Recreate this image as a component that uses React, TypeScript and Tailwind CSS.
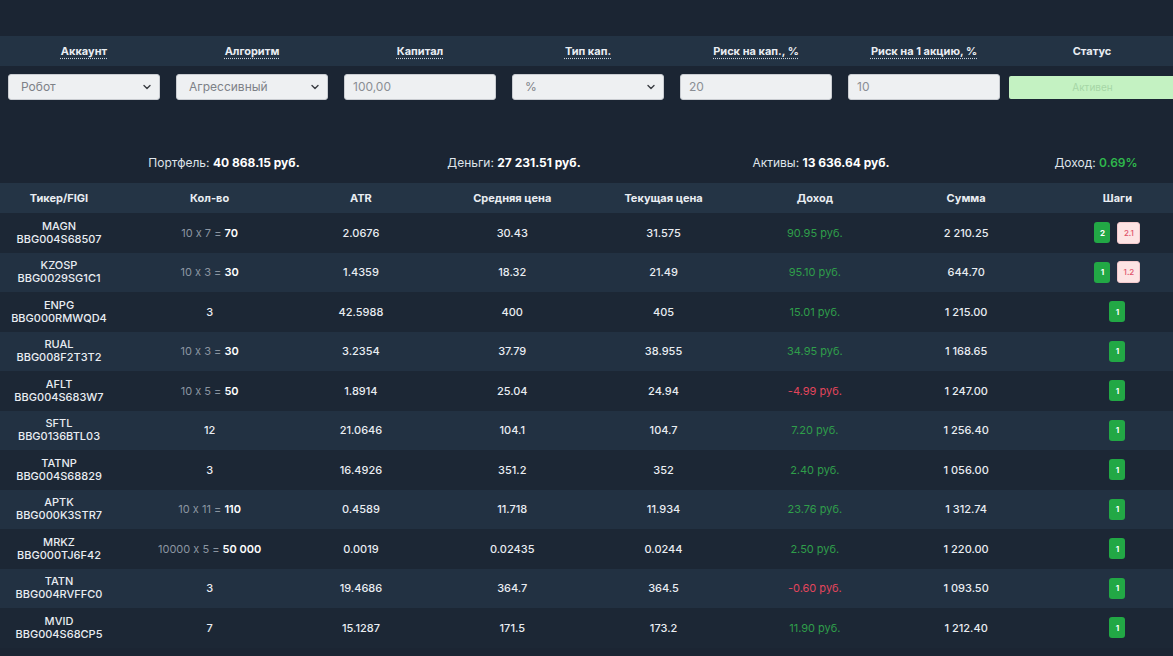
import { ChevronDown } from "lucide-react";

type Row = {
  ticker: string;
  figi: string;
  lot?: string;
  qty: string;
  atr: string;
  avg: string;
  cur: string;
  income: string;
  sum: string;
  steps: string[];
};

const rows: Row[] = [
  { ticker: "MAGN", figi: "BBG004S68507", lot: "10 x 7", qty: "70", atr: "2.0676", avg: "30.43", cur: "31.575", income: "90.95 руб.", sum: "2 210.25", steps: ["2", "2.1"] },
  { ticker: "KZOSP", figi: "BBG0029SG1C1", lot: "10 x 3", qty: "30", atr: "1.4359", avg: "18.32", cur: "21.49", income: "95.10 руб.", sum: "644.70", steps: ["1", "1.2"] },
  { ticker: "ENPG", figi: "BBG000RMWQD4", qty: "3", atr: "42.5988", avg: "400", cur: "405", income: "15.01 руб.", sum: "1 215.00", steps: ["1"] },
  { ticker: "RUAL", figi: "BBG008F2T3T2", lot: "10 x 3", qty: "30", atr: "3.2354", avg: "37.79", cur: "38.955", income: "34.95 руб.", sum: "1 168.65", steps: ["1"] },
  { ticker: "AFLT", figi: "BBG004S683W7", lot: "10 x 5", qty: "50", atr: "1.8914", avg: "25.04", cur: "24.94", income: "-4.99 руб.", sum: "1 247.00", steps: ["1"] },
  { ticker: "SFTL", figi: "BBG0136BTL03", qty: "12", atr: "21.0646", avg: "104.1", cur: "104.7", income: "7.20 руб.", sum: "1 256.40", steps: ["1"] },
  { ticker: "TATNP", figi: "BBG004S68829", qty: "3", atr: "16.4926", avg: "351.2", cur: "352", income: "2.40 руб.", sum: "1 056.00", steps: ["1"] },
  { ticker: "APTK", figi: "BBG000K3STR7", lot: "10 x 11", qty: "110", atr: "0.4589", avg: "11.718", cur: "11.934", income: "23.76 руб.", sum: "1 312.74", steps: ["1"] },
  { ticker: "MRKZ", figi: "BBG000TJ6F42", lot: "10000 x 5", qty: "50 000", atr: "0.0019", avg: "0.02435", cur: "0.0244", income: "2.50 руб.", sum: "1 220.00", steps: ["1"] },
  { ticker: "TATN", figi: "BBG004RVFFC0", qty: "3", atr: "19.4686", avg: "364.7", cur: "364.5", income: "-0.60 руб.", sum: "1 093.50", steps: ["1"] },
  { ticker: "MVID", figi: "BBG004S68CP5", qty: "7", atr: "15.1287", avg: "171.5", cur: "173.2", income: "11.90 руб.", sum: "1 212.40", steps: ["1"] },
];

const settingsLabels = [
  "Аккаунт",
  "Алгоритм",
  "Капитал",
  "Тип кап.",
  "Риск на кап., %",
  "Риск на 1 акцию, %",
];

function SelectBox({ value }: { value: string }) {
  return (
    <div className="flex h-[26px] items-center justify-between rounded-[3px] border border-[#c9ccd1] bg-[#eef0f2] pl-3 pr-[6px] text-[12px] text-[#7d8187]">
      <span>{value}</span>
      <ChevronDown size={12} strokeWidth={2.8} className="text-[#3a3d42]" />
    </div>
  );
}

function InputBox({ value }: { value: string }) {
  return (
    <div className="flex h-[26px] items-center rounded-[3px] border border-[#c9ccd1] bg-[#eef0f2] px-2 text-[12px] text-[#8a8e94]">
      {value}
    </div>
  );
}

function Step({ value }: { value: string }) {
  if (value.includes(".")) {
    return (
      <div className="flex h-[22px] w-[23px] items-center justify-center rounded-[3px] border border-[#f3c9cc] bg-[#fde4e4] text-[8px] text-[#e0526a]">
        {value}
      </div>
    );
  }
  return (
    <div className="flex h-[21px] w-[16px] items-center justify-center rounded-[3px] bg-[#22a845] text-[8px] font-bold text-white">
      {value}
    </div>
  );
}

const tableHeads = [
  "Тикер/FIGI",
  "Кол-во",
  "ATR",
  "Средняя цена",
  "Текущая цена",
  "Доход",
  "Сумма",
  "Шаги",
];

export default function App() {
  return (
    <div
      className="min-h-[656px] w-full overflow-hidden bg-[#1b2533] text-[#e9edf2] [font-feature-settings:'calt'_0]"
      style={{ fontFamily: "Inter, 'Noto Sans', sans-serif" }}
    >
      {/* TOP */}
      <div className="h-[36px]" />

      {/* SETTINGS */}
      <div className="grid h-[30px] grid-cols-[repeat(7,168px)] items-center bg-[#233344] text-[11px] font-bold">
        {settingsLabels.map((label) => (
          <div key={label} className="text-center">
            <span className="underline decoration-dotted decoration-[#c8d0da] underline-offset-[3px]">
              {label}
            </span>
          </div>
        ))}
        <div className="text-center">Статус</div>
      </div>

      <div className="grid grid-cols-[repeat(7,168px)] py-2">
        <div className="px-2">
          <SelectBox value="Робот" />
        </div>
        <div className="px-2">
          <SelectBox value="Агрессивный" />
        </div>
        <div className="px-2">
          <InputBox value="100,00" />
        </div>
        <div className="px-2">
          <SelectBox value="%" />
        </div>
        <div className="px-2">
          <InputBox value="20" />
        </div>
        <div className="px-2">
          <InputBox value="10" />
        </div>
        <div className="flex items-center pl-[1px]">
          <div className="flex h-[23px] w-[175px] items-center justify-center rounded-[2px] bg-[#c4f2c2] text-[10px] text-[#a6d6a6]">
            Активен
          </div>
        </div>
      </div>

      {/* SUMMARY */}
      <div className="grid h-[75px] grid-cols-[448px_132px_482px_68px] items-end pb-[10px] text-[12px] leading-[20px]">
        <div className="flex justify-center whitespace-nowrap">
          <span className="text-[#dfe4ea]">Портфель:&nbsp;</span>
          <span className="font-bold text-white">40 868.15 руб.</span>
        </div>
        <div className="flex justify-center whitespace-nowrap">
          <span className="text-[#dfe4ea]">Деньги:&nbsp;</span>
          <span className="font-bold text-white">27 231.51 руб.</span>
        </div>
        <div className="flex justify-center whitespace-nowrap">
          <span className="text-[#dfe4ea]">Активы:&nbsp;</span>
          <span className="font-bold text-white">13 636.64 руб.</span>
        </div>
        <div className="flex justify-center whitespace-nowrap">
          <span className="text-[#dfe4ea]">Доход:&nbsp;</span>
          <span className="font-semibold text-[#2fb84c]">0.69%</span>
        </div>
      </div>

      {/* TABLE */}
      <div className="grid h-[30px] grid-cols-[134px_repeat(7,151.3px)] items-center bg-[#243445] text-[11px] font-bold">
        {tableHeads.map((h, i) => (
          <div key={h} className={i === 0 ? "pr-4 text-center" : "text-center"}>
            {h}
          </div>
        ))}
      </div>

      {rows.map((row, i) => (
        <div
          key={row.ticker}
          className={`grid h-[39.5px] grid-cols-[134px_repeat(7,151.3px)] items-center text-[11px] font-medium ${
            i % 2 === 1 ? "bg-[#223142]" : "bg-[#1c2735]"
          }`}
        >
          <div className="pr-4 text-center leading-[13px]">
            <div>{row.ticker}</div>
            <div>{row.figi}</div>
          </div>
          <div className="text-center">
            {row.lot && (
              <span className="font-normal text-[#8b95a1]">{row.lot} = </span>
            )}
            <span className={row.lot ? "font-semibold text-white" : ""}>
              {row.qty}
            </span>
          </div>
          <div className="text-center">{row.atr}</div>
          <div className="text-center">{row.avg}</div>
          <div className="text-center">{row.cur}</div>
          <div
            className={`text-center font-normal ${
              row.income.startsWith("-") ? "text-[#e2455c]" : "text-[#2f9e4a]"
            }`}
          >
            {row.income}
          </div>
          <div className="text-center">{row.sum}</div>
          <div className="flex items-center justify-center gap-[7px]">
            {row.steps.map((s) => (
              <Step key={s} value={s} />
            ))}
          </div>
        </div>
      ))}
    </div>
  );
}
